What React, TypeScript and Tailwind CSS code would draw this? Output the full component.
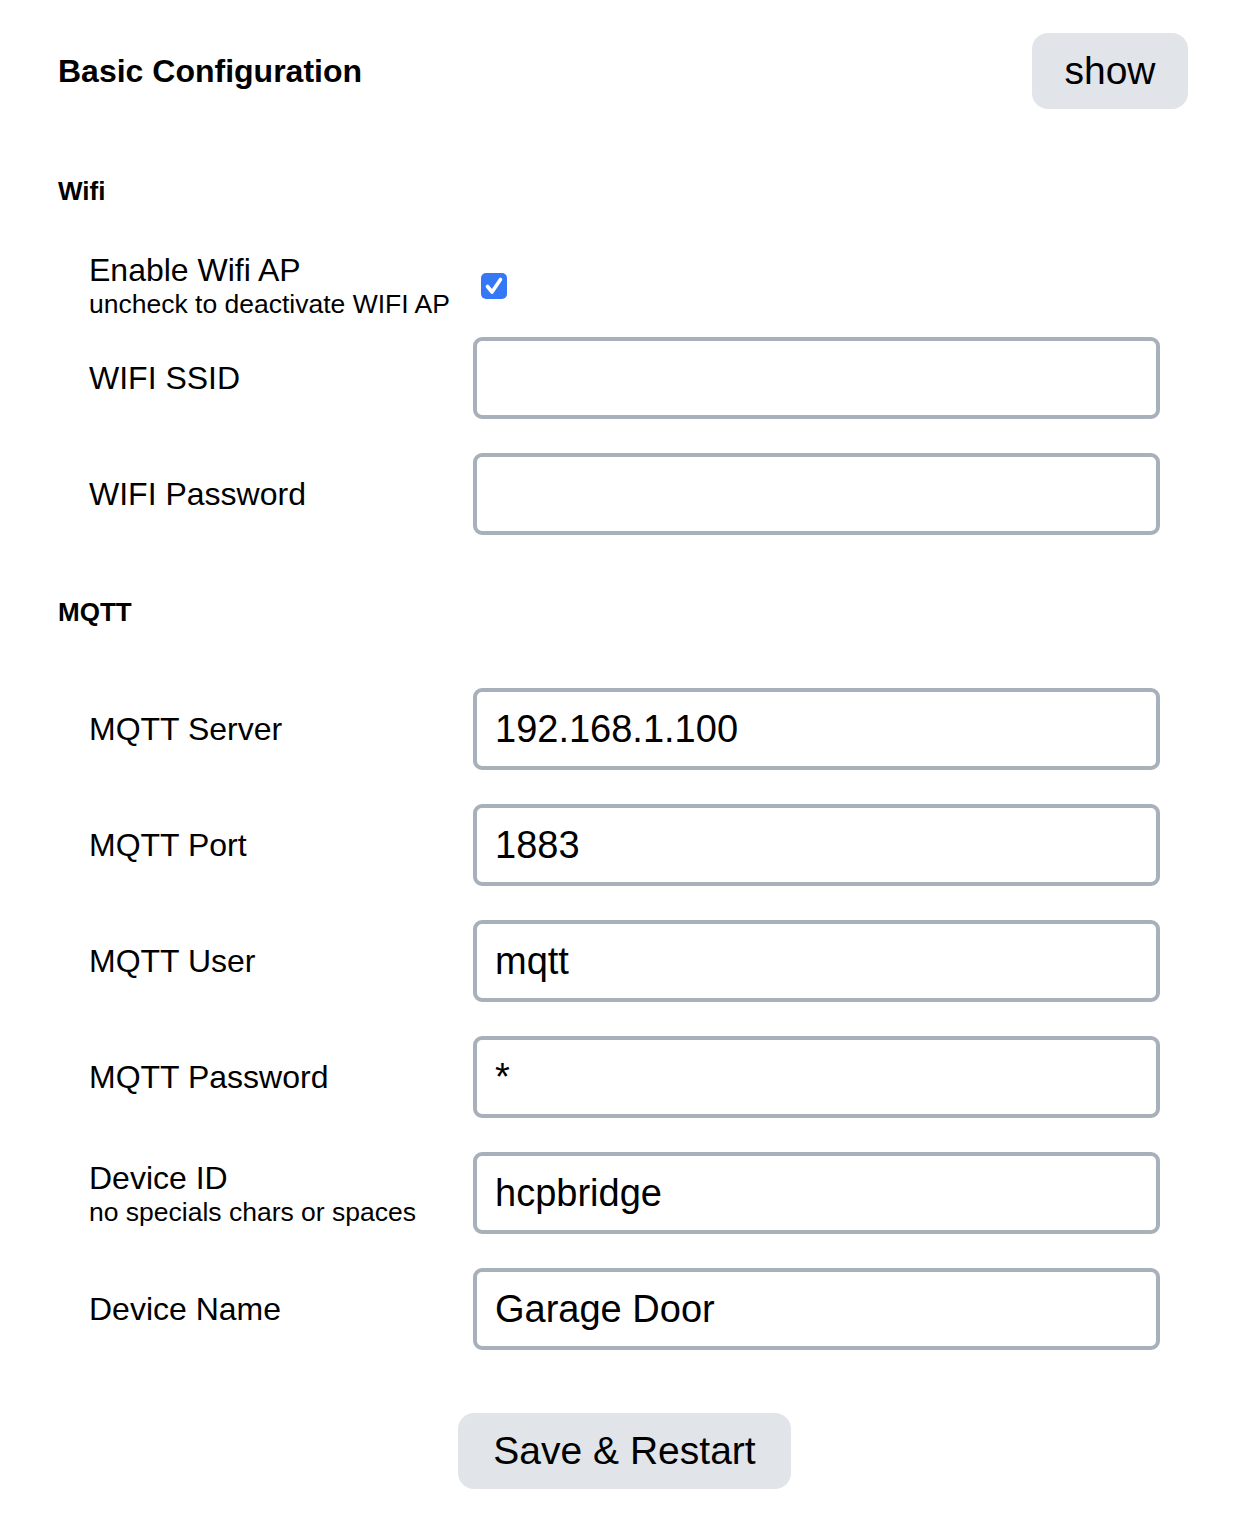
import { useState } from "react"

const font = { fontFamily: '"Liberation Sans", Arial, Helvetica, sans-serif' }

interface FieldProps {
    label: string
    hint?: string
    value: string
    className?: string
}

function Field({ label, hint, value, className = "" }: FieldProps) {
    const [text, setText] = useState(value)
    return (
        <div className={`flex items-center pl-[89px] ${className}`}>
            <div className="w-[384px] shrink-0 text-black">
                <div className="text-[32px] leading-[37px]">{label}</div>
                {hint && <div className="text-[26.5px] leading-[30px]">{hint}</div>}
            </div>
            <input
                type="text"
                value={text}
                onChange={(e) => setText(e.target.value)}
                className="w-[687px] h-[82px] px-[18px] rounded-[9px] border-4 border-[#a8b1bb] bg-white text-[38px] text-black outline-none"
                style={font}
            />
        </div>
    )
}

export default function App() {
    const [apEnabled, setApEnabled] = useState(true)

    return (
        <div className="w-[1254px] min-h-[1516px] bg-white pt-[33px] text-black" style={font}>
            <div className="flex items-center justify-between pl-[58px] pr-[66px]">
                <h2 className="text-[32px] font-bold leading-[37px]">Basic Configuration</h2>
                <button
                    type="button"
                    className="w-[156px] h-[76px] rounded-[16px] bg-[#e1e4e9] text-[39px] text-black"
                >
                    show
                </button>
            </div>

            <h3 className="mt-[67px] pl-[58px] text-[26px] font-bold leading-[30px]">Wifi</h3>

            <div className="mt-[46px] flex items-center pl-[89px] h-[68px]">
                <div className="w-[384px] shrink-0 -mt-[2px]">
                    <div className="text-[32px] leading-[37px]">Enable Wifi AP</div>
                    <div className="text-[26.5px] leading-[30px]">uncheck to deactivate WIFI AP</div>
                </div>
                <button
                    type="button"
                    onClick={() => setApEnabled(!apEnabled)}
                    className={`ml-[8px] w-[26px] h-[26px] rounded-[5px] flex items-center justify-center ${apEnabled ? "bg-[#3478f6]" : "border-2 border-[#8a8a8a] bg-white"}`}
                >
                    {apEnabled && (
                        <svg viewBox="0 0 26 26" className="w-[26px] h-[26px]">
                            <path d="M6.5 13.5 L11 19 L19.5 6.5" fill="none" stroke="white" strokeWidth="3.6" strokeLinecap="round" strokeLinejoin="round" />
                        </svg>
                    )}
                </button>
            </div>

            <Field label="WIFI SSID" value="" className="mt-[17px]" />
            <Field label="WIFI Password" value="" className="mt-[34px]" />

            <h3 className="mt-[62px] pl-[58px] text-[26px] font-bold leading-[30px]">MQTT</h3>

            <Field label="MQTT Server" value="192.168.1.100" className="mt-[61px]" />
            <Field label="MQTT Port" value="1883" className="mt-[34px]" />
            <Field label="MQTT User" value="mqtt" className="mt-[34px]" />
            <Field label="MQTT Password" value="*" className="mt-[34px]" />
            <Field label="Device ID" hint="no specials chars or spaces" value="hcpbridge" className="mt-[34px]" />
            <Field label="Device Name" value="Garage Door" className="mt-[34px]" />

            <div className="mt-[63px] flex justify-center pr-[5px]">
                <button
                    type="button"
                    className="w-[333px] h-[76px] rounded-[16px] bg-[#e1e4e9] text-[39px] text-black"
                >
                    Save &amp; Restart
                </button>
            </div>
        </div>
    )
}
